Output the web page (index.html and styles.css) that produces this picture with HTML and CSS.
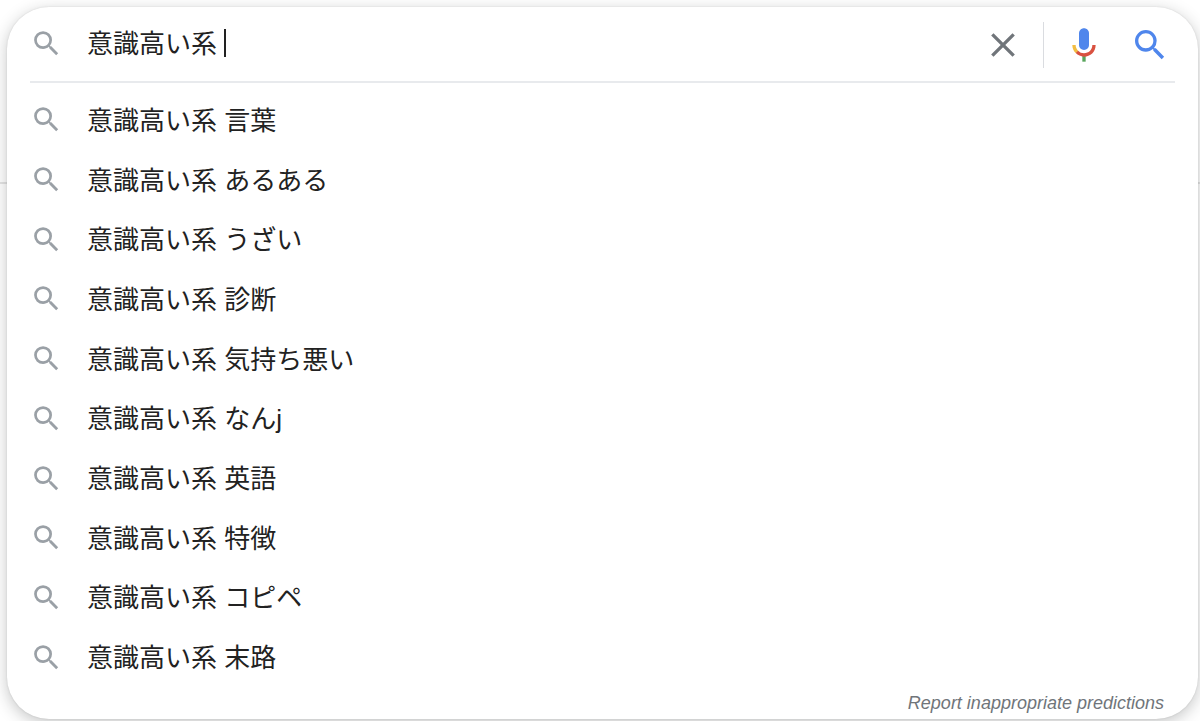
FILE: index.html
```html
<!DOCTYPE html>
<html lang="ja">

<head>
    <meta charset="UTF-8">
    <meta name="viewport" content="width=device-width, initial-scale=1.0">
    <title>Search</title>
    <link rel="stylesheet" href="styles.css">
</head>

<body>
    <!-- Shared icon shape -->
    <svg class="sprite" aria-hidden="true">
        <symbol id="icon-search" viewBox="0 0 24 24">
            <path d="M15.5 14h-.79l-.28-.27A6.471 6.471 0 0 0 16 9.5 6.5 6.5 0 1 0 9.5 16c1.61 0 3.09-.59 4.23-1.57l.27.28v.79l5 4.99L20.49 19l-4.99-5zm-6 0C7.01 14 5 11.99 5 9.5S7.01 5 9.5 5 14 7.01 14 9.5 11.99 14 9.5 14z"/>
        </symbol>
    </svg>

    <form class="search-card">
        <!-- Search box -->
        <div class="search-bar">
            <div class="search-field">
                <svg class="icon-small" aria-hidden="true"><use href="#icon-search"/></svg>
                <input type="text" class="search-input" value="意識高い系 " aria-label="Search">
                <span class="caret"></span>
            </div>
            <button type="reset" class="icon-button clear-button" aria-label="Clear">
                <svg viewBox="0 0 24 24"><path d="M5.6 5.6l12.8 12.8M18.4 5.6L5.6 18.4"/></svg>
            </button>
            <span class="divider"></span>
            <button type="button" class="icon-button mic-button" aria-label="Search by voice">
                <svg viewBox="0 0 24 24">
                    <path fill="#4f86ec" d="M12 15c1.66 0 3-1.31 3-2.97V5.01C15 3.35 13.66 2 12 2S9 3.34 9 5.01v7.02C9 13.69 10.34 15 12 15z"/>
                    <path fill="#58a55c" d="M11 18.08h2V22h-2z"/>
                    <path fill="#f2bd42" d="M7.05 16.87C5.78 15.54 5 14.04 5 12h2c0 1.45.56 2.42 1.47 3.38v.32l-1.15 1.18z"/>
                    <path fill="#d95140" d="M12 16.93a4.97 5.25 0 0 1-3.54-1.55l-1.41 1.49C8.31 18.21 10.07 19 12 19c3.87 0 6.99-2.92 6.99-7H17c0 2.92-2.23 4.93-5 4.93z"/>
                </svg>
            </button>
            <button type="submit" class="icon-button submit-button" aria-label="Search">
                <svg><use href="#icon-search"/></svg>
            </button>
        </div>

        <!-- Suggestions -->
        <ul class="suggestions">
            <li><svg class="icon-small" aria-hidden="true"><use href="#icon-search"/></svg><a href="#">意識高い系 言葉</a></li>
            <li><svg class="icon-small" aria-hidden="true"><use href="#icon-search"/></svg><a href="#">意識高い系 あるある</a></li>
            <li><svg class="icon-small" aria-hidden="true"><use href="#icon-search"/></svg><a href="#">意識高い系 うざい</a></li>
            <li><svg class="icon-small" aria-hidden="true"><use href="#icon-search"/></svg><a href="#">意識高い系 診断</a></li>
            <li><svg class="icon-small" aria-hidden="true"><use href="#icon-search"/></svg><a href="#">意識高い系 気持ち悪い</a></li>
            <li><svg class="icon-small" aria-hidden="true"><use href="#icon-search"/></svg><a href="#">意識高い系 なんj</a></li>
            <li><svg class="icon-small" aria-hidden="true"><use href="#icon-search"/></svg><a href="#">意識高い系 英語</a></li>
            <li><svg class="icon-small" aria-hidden="true"><use href="#icon-search"/></svg><a href="#">意識高い系 特徴</a></li>
            <li><svg class="icon-small" aria-hidden="true"><use href="#icon-search"/></svg><a href="#">意識高い系 コピペ</a></li>
            <li><svg class="icon-small" aria-hidden="true"><use href="#icon-search"/></svg><a href="#">意識高い系 末路</a></li>
        </ul>

        <a class="report-link" href="#">Report inappropriate predictions</a>
    </form>
</body>

</html>
```
FILE: styles.css
```css
* {
    box-sizing: border-box;
}

body {
    margin: 0;
    padding: 7px 2px 2px 7px;
    min-height: 100vh;
    display: flex;
    background: linear-gradient(#e4e4e4, #e4e4e4) 0 182px / 100% 2px no-repeat #fff;
    font-family: "Liberation Sans", "Noto Sans CJK JP", sans-serif;
    font-size: 26px;
    color: #222;
}

.sprite {
    display: none;
}

.search-card {
    flex: 1;
    display: flex;
    flex-direction: column;
    background-color: #fff;
    border-radius: 42px;
    box-shadow: 0 0 2px rgba(32, 33, 36, 0.12), 0 4px 16px rgba(32, 33, 36, 0.26);
}

.search-bar {
    display: flex;
    align-items: center;
    height: 76px;
    margin: 0 23px;
    padding-top: 1px;
    border-bottom: 2px solid #e8eaed;
}

.icon-small {
    flex: none;
    width: 33px;
    height: 33px;
    margin-right: 24px;
    fill: #9aa0a6;
}

.search-field {
    flex: 1;
    display: flex;
    align-items: center;
    padding-bottom: 3px;
}

.search-input {
    field-sizing: content;
    padding: 0 0 3px;
    border: none;
    outline: none;
    background: none;
    font: inherit;
    color: inherit;
    caret-color: transparent;
}

.caret {
    width: 2px;
    height: 28px;
    background-color: #222;
}

.icon-button {
    display: flex;
    padding: 0;
    border: none;
    background: none;
    cursor: pointer;
}

.icon-button svg {
    width: 40px;
    height: 40px;
}

.clear-button {
    margin-right: 20px;
}

.clear-button svg {
    fill: none;
    stroke: #70757a;
    stroke-width: 2;
}

.divider {
    width: 1px;
    height: 46px;
    margin-right: 20px;
    background-color: #dadce0;
}

.mic-button {
    margin-right: 26px;
}

.submit-button {
    margin-right: 5px;
    fill: #4f86ec;
}

.suggestions {
    flex: 1;
    display: flex;
    flex-direction: column;
    margin: 0;
    padding: 7px 23px 0;
    list-style: none;
}

.suggestions li {
    flex: 1;
    display: flex;
    align-items: center;
}

.suggestions a {
    padding-bottom: 3px;
    color: inherit;
    text-decoration: none;
}

.report-link {
    align-self: flex-end;
    margin-right: 34px;
    font-size: 18px;
    font-style: italic;
    line-height: 32px;
    color: #70757a;
    text-decoration: none;
}
```
